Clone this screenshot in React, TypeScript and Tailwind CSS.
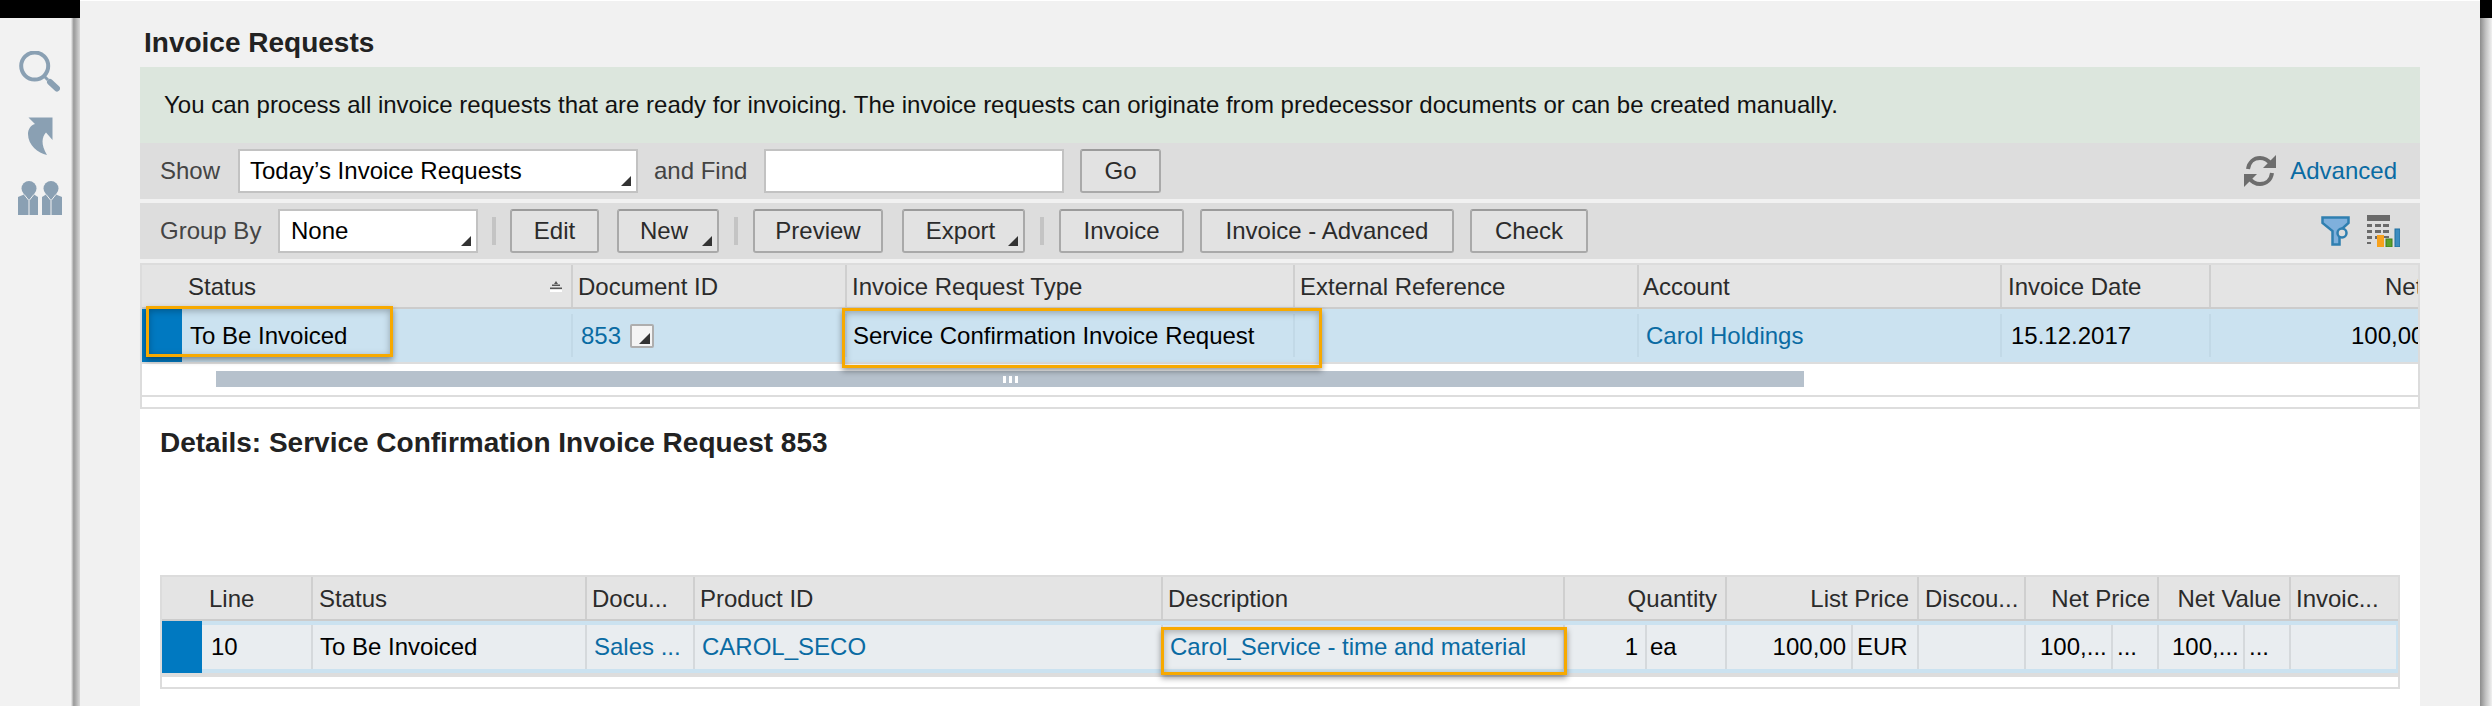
import type { ReactNode } from "react";

const link = "text-[#0a6ba3]";

function Tri({ className }: { className: string }) {
  return (
    <svg viewBox="0 0 10 10" className={className}>
      <polygon points="10,0 10,10 0,10" fill="#333" />
    </svg>
  );
}

function Btn({ className, children }: { className: string; children: ReactNode }) {
  return (
    <div
      className={`relative flex h-[44px] shrink-0 items-center justify-center rounded-[3px] border-2 border-[#a9a9a9] border-t-[#9b9b9b] bg-[#e2e2e2] text-[#2b2b2b] ${className}`}
    >
      {children}
    </div>
  );
}

function Select({ className, pad, children }: { className: string; pad: string; children: ReactNode }) {
  return (
    <div className={`relative flex h-[44px] shrink-0 items-center border-2 border-[#c2c2c2] bg-white text-black ${pad} ${className}`}>
      {children}
      <Tri className="absolute bottom-[5px] right-[5px] h-[10px] w-[10px]" />
    </div>
  );
}

function Sep({ className }: { className: string }) {
  return <div className={`h-[28px] w-[4px] shrink-0 bg-[#c4c4c4] ${className}`} />;
}

function Head({ className, children }: { className: string; children?: ReactNode }) {
  return (
    <div className={`flex h-full shrink-0 items-center overflow-hidden whitespace-nowrap border-r-2 border-[#cfcfcf] pt-[2px] text-[#2b2b2b] ${className}`}>
      {children}
    </div>
  );
}

function Cell({ className, children }: { className: string; children?: ReactNode }) {
  return (
    <div className={`flex shrink-0 items-center overflow-hidden whitespace-nowrap ${className}`}>
      {children}
    </div>
  );
}

function SearchIcon() {
  return (
    <svg viewBox="0 0 41 41" className="h-[41px] w-[41px]">
      <circle cx="15.700" cy="15" r="13.500" fill="none" stroke="#8aa0b3" strokeWidth="4" />
      <path d="M25 25l4 4" stroke="#8aa0b3" strokeWidth="3" />
      <path d="M31 31l7 6.500" stroke="#8aa0b3" strokeWidth="6" strokeLinecap="round" />
    </svg>
  );
}

function JumpIcon() {
  return (
    <svg viewBox="0 0 25 38" className="h-[38px] w-[25px]">
      <path d="M0.500 0.500H24.500V23L18 15.500C14 20 12.500 27 19 38C10 36 0 28 0 17C0 12 3 8 7 7Z" fill="#8aa0b3" />
    </svg>
  );
}

function PeopleIcon() {
  return (
    <svg viewBox="0 0 45 34" className="h-[34px] w-[45px]">
      <g fill="#8aa0b3">
        <circle cx="11" cy="7.500" r="7.500" />
        <circle cx="33" cy="7.500" r="7.500" />
        <path d="M0 16L6 13.500H16L20 16V34H0Z" />
        <path d="M24 16L28 13.500H38L44 16V34H24Z" />
      </g>
      <g stroke="#f2f2f2" strokeWidth="1" fill="none">
        <path d="M6.500 14L10.500 19M15.500 14L11.500 19M11 19V34" />
        <path d="M28.500 14L32.500 19M37.500 14L33.500 19M33 19V34" />
      </g>
    </svg>
  );
}

function RefreshIcon() {
  return (
    <svg viewBox="0 0 32 32" className="h-[32px] w-[32px]">
      <g fill="none" stroke="#6d6d6d" strokeWidth="4">
        <path d="M4 14C5 7 10 3 16 3C21 3 24 5 27 9" />
        <path d="M28 18C27 25 22 29 16 29C11 29 8 27 5 23" />
      </g>
      <polygon points="32,0 32,13 19,13" fill="#6d6d6d" />
      <polygon points="0,32 0,19 13,19" fill="#6d6d6d" />
    </svg>
  );
}

function FunnelIcon() {
  return (
    <svg viewBox="0 0 29 30" className="h-[30px] w-[29px]">
      <path
        d="M1.500 1.500H27.500V7L18.500 15V28.500H11.500V15L1.500 7Z"
        fill="#7fb0dc"
        stroke="#2f7fb0"
        strokeWidth="2.500"
      />
      <circle cx="21" cy="17" r="4.500" fill="#dddddd" stroke="#2f7fb0" strokeWidth="2.500" />
    </svg>
  );
}

function TableChartIcon() {
  return (
    <svg viewBox="0 0 33 32" className="h-[32px] w-[33px]">
      <rect x="0" y="0" width="23" height="6" fill="#6a6a6a" />
      {[9, 15, 21].map((y) => (
        <g key={y} fill="#6a6a6a">
          <rect x="0" y={y} width="5" height="3" />
          <rect x="8" y={y} width="6" height="3" />
          <rect x="16" y={y} width="6" height={y === 21 ? 2 : 3} />
        </g>
      ))}
      <rect x="0" y="27" width="4" height="2" fill="#6a6a6a" />
      <rect x="10" y="20" width="7" height="12" fill="#f7a11c" />
      <rect x="19" y="24" width="6" height="8" fill="#5aa12b" stroke="#3f7d1e" />
      <rect x="28" y="14" width="5" height="18" fill="#3c8cc0" stroke="#1f6f9f" />
    </svg>
  );
}

function Highlight({ className }: { className: string }) {
  return (
    <div
      className={`pointer-events-none absolute border-[3px] border-[#f7a900] shadow-[0_3px_6px_rgba(0,0,0,0.4),inset_0_2px_7px_rgba(0,0,0,0.28)] ${className}`}
    />
  );
}

export default function App() {
  return (
    <div className="relative flex h-[706px] w-[2492px] overflow-hidden bg-white font-['Liberation_Sans',Arial,sans-serif] text-[24px] text-black">
      {/* left rail */}
      <div className="flex w-[80px] shrink-0 flex-col bg-[#f2f2f2]">
        <div className="h-[18px] bg-black" />
        <div className="relative flex flex-1 flex-col pl-[19px] pt-[33px]">
          <div className="absolute inset-y-0 right-0 w-[9px] bg-[linear-gradient(90deg,#eee,#9a9a9a_30%,#aaa_50%,#d8d8d8)]" />
          <SearchIcon />
          <div className="ml-[9px] mt-[25px]">
            <JumpIcon />
          </div>
          <div className="-ml-[1px] mt-[26px]">
            <PeopleIcon />
          </div>
        </div>
      </div>

      {/* main panel */}
      <div className="mt-[1px] flex w-[2400px] shrink-0 flex-col bg-[#f1f1f1] px-[60px]">
        <div className="flex h-[66px] shrink-0 items-center pl-[4px] pt-[18px] text-[28px] font-bold leading-none text-[#222]">
          Invoice Requests
        </div>

        <div className="flex h-[76px] shrink-0 items-center bg-[#dce6dd] pl-[24px] text-[#111]">
          You can process all invoice requests that are ready for invoicing. The invoice requests can originate from predecessor documents or can be created manually.
        </div>

        {/* show bar */}
        <div className="flex h-[56px] shrink-0 items-center bg-[#dddddd] pl-[20px] pr-[23px]">
          <div className="w-[78px] shrink-0 text-[#444]">Show</div>
          <Select className="w-[400px]" pad="pl-[10px]">Today’s Invoice Requests</Select>
          <div className="ml-[16px] w-[110px] shrink-0 text-[#444]">and Find</div>
          <div className="h-[44px] w-[300px] shrink-0 border-2 border-[#c2c2c2] bg-white" />
          <Btn className="ml-[16px] w-[81px]">Go</Btn>
          <div className="ml-auto flex items-center gap-[14px]">
            <RefreshIcon />
            <span className={link}>Advanced</span>
          </div>
        </div>

        {/* action bar */}
        <div className="mt-[4px] flex h-[56px] shrink-0 items-center bg-[#dddddd] pl-[20px] pr-[20px]">
          <div className="w-[118px] shrink-0 text-[#444]">Group By</div>
          <Select className="w-[200px]" pad="pl-[11px]">None</Select>
          <Sep className="ml-[14px]" />
          <Btn className="ml-[14px] w-[89px]">Edit</Btn>
          <Btn className="ml-[18px] w-[102px] pr-[8px]">
            New
            <Tri className="absolute bottom-[5px] right-[5px] h-[10px] w-[10px]" />
          </Btn>
          <Sep className="ml-[15px]" />
          <Btn className="ml-[15px] w-[130px]">Preview</Btn>
          <Btn className="ml-[19px] w-[123px] pr-[6px]">
            Export
            <Tri className="absolute bottom-[5px] right-[5px] h-[10px] w-[10px]" />
          </Btn>
          <Sep className="ml-[15px]" />
          <Btn className="ml-[15px] w-[125px]">Invoice</Btn>
          <Btn className="ml-[16px] w-[254px]">Invoice - Advanced</Btn>
          <Btn className="ml-[16px] w-[118px]">Check</Btn>
          <div className="ml-auto flex items-center gap-[17px]">
            <FunnelIcon />
            <TableChartIcon />
          </div>
        </div>

        {/* invoice request table */}
        <div className="mt-[4px] shrink-0 border-x-2 border-t-2 border-[#dcdcdc] bg-white">
          <div className="flex h-[44px] border-b-2 border-[#cccccc] bg-[#e4e4e4]">
            <Head className="relative w-[431px] pl-[46px]">
              Status
              <svg viewBox="0 0 12 11" className="absolute right-[9px] top-[16px] h-[11px] w-[12px]">
                <polygon points="6,0 8,3 4,3" fill="#555" />
                <rect x="2" y="3.500" width="8" height="1.500" fill="#555" />
                <rect x="0" y="6.500" width="12" height="1.500" fill="#555" />
                <rect x="0" y="9" width="12" height="2" fill="#fff" />
              </svg>
            </Head>
            <Head className="w-[274px] pl-[5px]">Document ID</Head>
            <Head className="w-[448px] pl-[5px]">Invoice Request Type</Head>
            <Head className="w-[344px] pl-[5px]">External Reference</Head>
            <Head className="w-[363px] pl-[4px]">Account</Head>
            <Head className="w-[209px] pl-[6px]">Invoice Date</Head>
            <div className="flex flex-1 items-center overflow-hidden whitespace-nowrap pl-[174px] pt-[2px] text-[#2b2b2b]">Net Value</div>
          </div>

          <div className="flex h-[53px] bg-[#cbe2f0]">
            <div className="w-[40px] shrink-0 bg-[#0079c1]" />
            <Cell className="my-[5px] w-[391px] border-r-2 border-[#c2d9e7] pl-[8px]">To Be Invoiced</Cell>
            <Cell className={`my-[5px] w-[274px] border-r-2 border-[#c2d9e7] pl-[8px] ${link}`}>
              853
              <span className="ml-[9px] flex h-[24px] w-[24px] items-end justify-end rounded-[2px] border-2 border-[#aeaeae] bg-[#f4f4f4] p-[2px]">
                <Tri className="h-[11px] w-[11px]" />
              </span>
            </Cell>
            <Cell className="my-[5px] w-[448px] border-r-2 border-[#c2d9e7] pl-[6px]">Service Confirmation Invoice Request</Cell>
            <Cell className="my-[5px] w-[344px] border-r-2 border-[#c2d9e7]" />
            <Cell className={`my-[5px] w-[363px] border-r-2 border-[#c2d9e7] pl-[7px] ${link}`}>Carol Holdings</Cell>
            <Cell className="my-[5px] w-[209px] border-r-2 border-[#c2d9e7] pl-[9px]">15.12.2017</Cell>
            <Cell className="my-[5px] min-w-0 flex-1 pl-[140px]">100,00 EUR</Cell>
          </div>

          <div className="h-[33px] border-t-2 border-[#dddddd] pl-[74px] pt-[7px]">
            <div className="relative flex h-[16px] w-[1588px] items-center justify-center gap-[3px] bg-[#b6c1cc]">
              <span className="h-[7px] w-[3px] bg-white" />
              <span className="h-[7px] w-[3px] bg-white" />
              <span className="h-[7px] w-[3px] bg-white" />
            </div>
          </div>
          <div className="h-[14px] border-y-2 border-[#dddddd]" />
        </div>

        {/* details */}
        <div className="flex-1 bg-white px-[20px]">
          <div className="h-[166px] pt-[20px] text-[28px] font-bold leading-[28px] text-[#222]">
            Details: Service Confirmation Invoice Request 853
          </div>

          <div className="border-x-2 border-t-2 border-[#dcdcdc]">
            <div className="flex h-[44px] border-b-2 border-[#cccccc] bg-[#e4e4e4]">
              <Head className="w-[151px] pl-[47px]">Line</Head>
              <Head className="w-[274px] pl-[6px]">Status</Head>
              <Head className="w-[108px] pl-[5px]">Docu...</Head>
              <Head className="w-[468px] pl-[5px]">Product ID</Head>
              <Head className="w-[402px] pl-[5px]">Description</Head>
              <Head className="w-[162px] justify-end pr-[8px]">Quantity</Head>
              <Head className="w-[192px] justify-end pr-[8px]">List Price</Head>
              <Head className="w-[107px] pl-[6px]">Discou...</Head>
              <Head className="w-[133px] justify-end pr-[7px]">Net Price</Head>
              <Head className="w-[132px] justify-end pr-[8px]">Net Value</Head>
              <div className="flex items-center whitespace-nowrap pl-[5px] pt-[2px] text-[#2b2b2b]">Invoic...</div>
            </div>

            <div className="flex h-[52px] bg-[#cbe2f0]">
              <div className="w-[40px] shrink-0 bg-[#0079c1]" />
              <Cell className="my-[4px] w-[111px] border-r-2 border-[#d5d9dc] bg-[#e9edf0] pl-[9px]">10</Cell>
              <Cell className="my-[4px] w-[274px] border-r-2 border-[#d5d9dc] bg-[#e9edf0] pl-[7px]">To Be Invoiced</Cell>
              <Cell className={`my-[4px] w-[108px] border-r-2 border-[#d5d9dc] bg-[#e9edf0] pl-[7px] ${link}`}>Sales ...</Cell>
              <Cell className={`my-[4px] w-[468px] border-r-2 border-[#d5d9dc] bg-[#e9edf0] pl-[7px] ${link}`}>CAROL_SECO</Cell>
              <Cell className={`my-[4px] w-[402px] border-r-2 border-[#d5d9dc] bg-[#e9edf0] pl-[7px] ${link}`}>Carol_Service - time and material</Cell>
              <Cell className="my-[4px] w-[82px] justify-end border-r-2 border-[#d5d9dc] bg-[#e9edf0] pr-[7px]">1</Cell>
              <Cell className="my-[4px] w-[80px] border-r-2 border-[#d5d9dc] bg-[#e9edf0] pl-[3px]">ea</Cell>
              <Cell className="my-[4px] w-[126px] justify-end border-r-2 border-[#d5d9dc] bg-[#e9edf0] pr-[5px]">100,00</Cell>
              <Cell className="my-[4px] w-[66px] border-r-2 border-[#d5d9dc] bg-[#e9edf0] pl-[4px]">EUR</Cell>
              <Cell className="my-[4px] w-[107px] border-r-2 border-[#d5d9dc] bg-[#e9edf0]" />
              <Cell className="my-[4px] w-[87px] border-r-2 border-[#d5d9dc] bg-[#e9edf0] pl-[14px]">100,...</Cell>
              <Cell className="my-[4px] w-[46px] border-r-2 border-[#d5d9dc] bg-[#e9edf0] pl-[4px]">...</Cell>
              <Cell className="my-[4px] w-[86px] border-r-2 border-[#d5d9dc] bg-[#e9edf0] pl-[13px]">100,...</Cell>
              <Cell className="my-[4px] w-[46px] border-r-2 border-[#d5d9dc] bg-[#e9edf0] pl-[4px]">...</Cell>
              <Cell className="my-[4px] w-[105px] bg-[#e9edf0]" />
            </div>

            <div className="h-[16px] border-b-2 border-t-4 border-[#dddddd] bg-white" />
          </div>
        </div>
      </div>

      {/* right rail */}
      <div className="flex w-[12px] shrink-0 flex-col">
        <div className="h-[18px] bg-black" />
        <div className="flex-1 bg-[linear-gradient(90deg,#8c8c8c,#c4c4c4_50%,#f0f0f0)]" />
      </div>

      <Highlight className="left-[146px] top-[306px] h-[51px] w-[247px]" />
      <Highlight className="left-[842px] top-[308px] h-[60px] w-[480px]" />
      <Highlight className="left-[1161px] top-[627px] h-[48px] w-[406px]" />
    </div>
  );
}
